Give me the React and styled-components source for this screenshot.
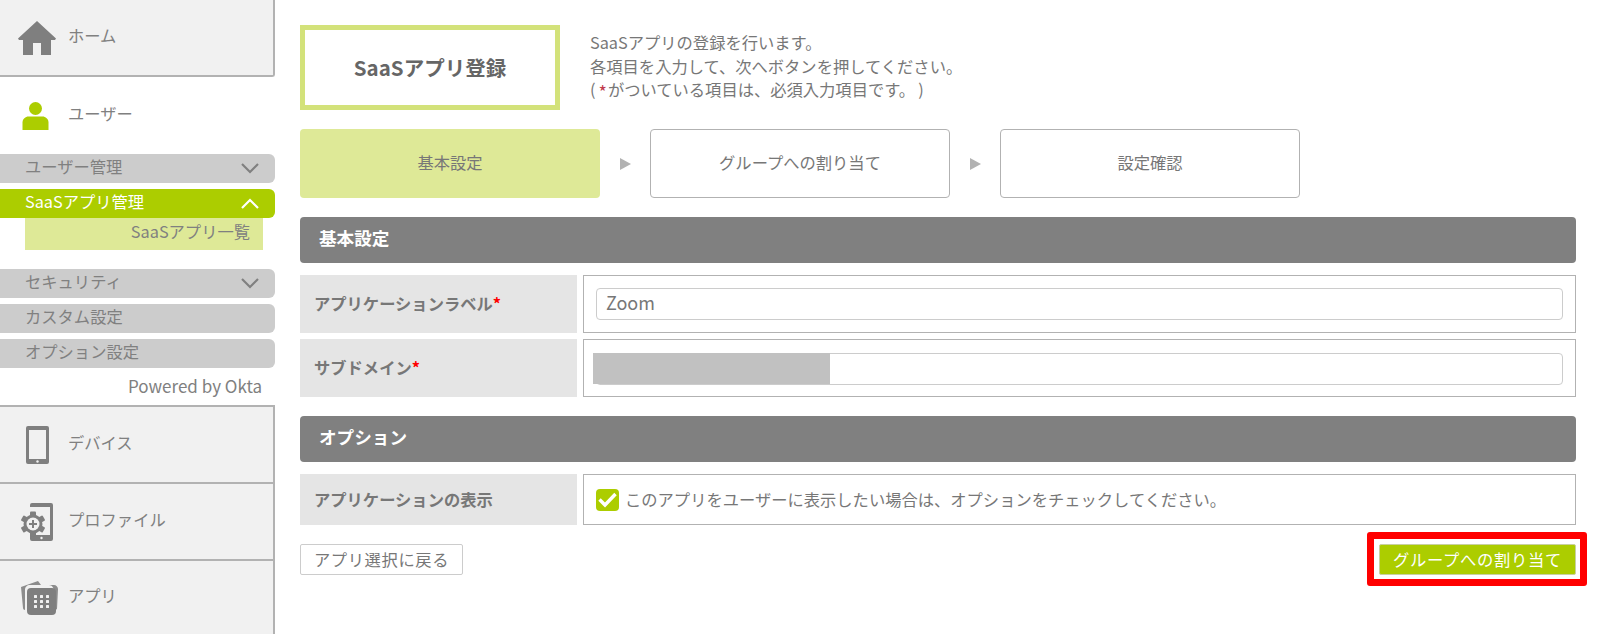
import React from "react";
import styled, { createGlobalStyle } from "styled-components";

const FONT = `"Noto Sans CJK JP", "Noto Sans", sans-serif`;
const GREEN = "#accd00";
const BORDER = "#b2b2b2";
const TEXT_SIZE = "16.3px";

const Global = createGlobalStyle`
  html, body { margin: 0; padding: 0; background: #fff; }
  body { font-family: ${FONT}; font-size: ${TEXT_SIZE}; color: #777; text-spacing-trim: space-all; }
  * { box-sizing: border-box; }
`;

const Page = styled.div`
  display: flex;
  width: 1612px;
  height: 634px;
  overflow: hidden;
`;

const Sidebar = styled.nav`
  width: 275px;
  flex: none;
  display: flex;
  flex-direction: column;
`;

const NavItem = styled.a`
  display: flex;
  align-items: center;
  height: ${(p) => p.$h}px;
  background: ${(p) => (p.$active ? "#fff" : "#f1f1f1")};
  border-right: ${(p) => (p.$active ? "0" : `2px solid ${BORDER}`)};
  border-bottom: ${(p) => (p.$active || p.$last ? "0" : `2px solid ${BORDER}`)};
  border-top: ${(p) => (p.$top ? `2px solid ${BORDER}` : "0")};
  border-bottom-right-radius: ${(p) => (p.$round ? "3px" : "0")};
  color: #808080;
  line-height: 1;
`;

const NavLabel = styled.span`
  padding-bottom: 4px;
`;

const IconSlot = styled.span`
  width: 68px;
  flex: none;
  display: flex;
  justify-content: center;
  padding-left: ${(p) => p.$pl || 0}px;
  svg { display: block; }
`;

const MenuList = styled.div`
  display: flex;
  flex-direction: column;
`;

const Pill = styled.div`
  height: 29px;
  margin-top: ${(p) => p.$mt ?? 6}px;
  padding: 0 16px 0 25px;
  display: flex;
  align-items: center;
  justify-content: space-between;
  background: ${(p) => (p.$on ? GREEN : "#ccc")};
  color: ${(p) => (p.$on ? "#fff" : "#808080")};
  border-radius: 0 6px 6px 0;
  line-height: 1;
  svg { display: block; }
`;

const PillLabel = styled.span`
  padding-bottom: 4px;
`;

const SubItem = styled.div`
  height: 32px;
  margin: 0 12px 13px 25px;
  padding: 0 13px 6px 0;
  display: flex;
  align-items: center;
  justify-content: flex-end;
  background: #dee997;
  color: #808080;
  line-height: 1;
`;

const Powered = styled.div`
  height: 37px;
  padding: 0 13px 3px 0;
  display: flex;
  align-items: center;
  justify-content: flex-end;
  color: #808080;
  font-size: 17px;
  line-height: 1;
`;

const Main = styled.main`
  width: 1276px;
  margin-left: 25px;
  padding-top: 25px;
  display: flex;
  flex-direction: column;
`;

const TitleRow = styled.header`
  display: flex;
  height: 85px;
`;

const TitleBox = styled.h1`
  width: 260px;
  height: 85px;
  margin: 0;
  padding-bottom: 2px;
  display: flex;
  align-items: center;
  justify-content: center;
  border: 5px solid #d3e27a;
  color: #666;
  font-size: 20.5px;
  font-weight: 700;
`;

const Description = styled.div`
  margin-left: 30px;
  padding-top: 6px;
  line-height: 23.5px;
  color: #777;
`;

const Asterisk = styled.span`
  padding: 0 1px 0 3px;
  color: #c0394b;
  font-size: 18px;
  line-height: 0;
  vertical-align: -3px;
`;

const Bracket = styled.span`
  padding-left: 3px;
`;

const Steps = styled.div`
  display: flex;
  align-items: center;
  margin-top: 19px;
`;

const Step = styled.div`
  width: 300px;
  height: 69px;
  padding-bottom: 4px;
  display: flex;
  align-items: center;
  justify-content: center;
  border-radius: 4px;
  border: ${(p) => (p.$on ? "0" : `1px solid ${BORDER}`)};
  background: ${(p) => (p.$on ? "#dee997" : "#fff")};
  color: #777;
`;

const StepArrow = styled.span`
  width: 50px;
  display: flex;
  justify-content: center;
  &::before {
    content: "";
    border-left: 11px solid ${BORDER};
    border-top: 6px solid transparent;
    border-bottom: 6px solid transparent;
  }
`;

const SectionBar = styled.h2`
  height: 46px;
  margin: ${(p) => p.$mt}px 0 12px;
  padding: 0 0 6px 19px;
  display: flex;
  align-items: center;
  background: #808080;
  border-radius: 4px;
  color: #fff;
  font-size: 17.6px;
  font-weight: 700;
`;

const FormRow = styled.div`
  display: flex;
  gap: 6px;
  height: ${(p) => p.$h}px;
  margin-top: ${(p) => p.$mt || 0}px;
`;

const RowLabel = styled.div`
  width: 277px;
  flex: none;
  display: flex;
  align-items: center;
  padding: 0 0 2px 14px;
  background: #e5e5e5;
  color: #777;
  font-weight: 700;
`;

const Required = styled.span`
  color: #f00;
`;

const RowValue = styled.div`
  flex: 1;
  display: flex;
  align-items: center;
  padding: 0 12px;
  border: 1px solid ${BORDER};
  color: #777;
`;

const ValueText = styled.span`
  padding-bottom: 2px;
`;

const TextInput = styled.input`
  width: 100%;
  height: 32px;
  padding: 0 9px 4px;
  border: 1px solid #ccc;
  border-radius: 4px;
  outline: none;
  background: #fff;
  color: #777;
  font-family: ${FONT};
  font-size: 18px;
`;

const MaskedField = styled.div`
  position: relative;
  width: 100%;
  height: 32px;
  margin-top: 2px;
  border: 1px solid #ccc;
  border-radius: 4px;
  background: #fff;
`;

const Mask = styled.span`
  position: absolute;
  left: -4px;
  top: -1px;
  width: 237px;
  height: 31px;
  background: #c1c1c1;
`;

const CheckBox = styled.span`
  width: 23px;
  height: 22px;
  flex: none;
  margin-right: 6px;
  display: flex;
  align-items: center;
  justify-content: center;
  background: ${GREEN};
  border-radius: 4px;
`;

const Footer = styled.div`
  position: relative;
  display: flex;
  justify-content: space-between;
  margin-top: 19px;
`;

const BackButton = styled.button`
  width: 163px;
  height: 31px;
  padding: 0 0 2px;
  background: #fff;
  border: 1px solid #ccc;
  border-radius: 2px;
  color: #777;
  font-family: ${FONT};
  font-size: ${TEXT_SIZE};
  letter-spacing: 0.6px;
`;

const NextButton = styled.button`
  width: 197px;
  height: 31px;
  padding: 0 0 2px;
  background: ${GREEN};
  border: 1px solid #c8d0a0;
  border-radius: 2px;
  color: #fff;
  font-family: ${FONT};
  font-size: ${TEXT_SIZE};
  letter-spacing: 0.7px;
`;

const Highlight = styled.span`
  position: absolute;
  right: -11px;
  top: -12px;
  width: 220px;
  height: 54px;
  border: 7px solid #f00;
  border-radius: 3px;
  pointer-events: none;
`;

const HomeIcon = () => (
  <svg width="38" height="34" viewBox="0 0 38 34">
    <path fill="#7f7f7f" d="M19 0 38 17.5l-1 1.5H33v15H23V22h-8v12H5V19H1L0 17.5z" />
  </svg>
);

const UserIcon = () => (
  <svg width="27" height="28" viewBox="0 0 26 28">
    <circle cx="13" cy="6.5" r="6.5" fill={GREEN} />
    <path fill={GREEN} d="M0 28v-7.5C0 17 3 14.500 6 14.500h14c3 0 6 2.500 6 6V28z" />
  </svg>
);

const PhoneIcon = () => (
  <svg width="23" height="38" viewBox="0 0 23 38">
    <path
      fill="#7f7f7f"
      fillRule="evenodd"
      d="M2 0h19a2 2 0 0 1 2 2v34a2 2 0 0 1-2 2H2a2 2 0 0 1-2-2V2a2 2 0 0 1 2-2zM3 4v29h17V4z"
    />
    <circle cx="11.500" cy="35.500" r="1.200" fill="#f1f1f1" />
  </svg>
);

const ProfileIcon = () => (
  <svg width="34" height="38" viewBox="0 0 34 38">
    <path
      fill="#7f7f7f"
      fillRule="evenodd"
      d="M12 0h19a2 2 0 0 1 2 2v34a2 2 0 0 1-2 2H12a2 2 0 0 1-2-2v-4h20V4H10V2a2 2 0 0 1 2-2z"
    />
    <circle cx="21.500" cy="35" r="1.200" fill="#f1f1f1" />
    <g fill="#7f7f7f">
      <circle cx="13" cy="21" r="9.500" />
      <rect x="10" y="8.500" width="6" height="25" rx="1" />
      <rect x="10" y="8.500" width="6" height="25" rx="1" transform="rotate(60 13 21)" />
      <rect x="10" y="8.500" width="6" height="25" rx="1" transform="rotate(120 13 21)" />
    </g>
    <circle cx="13" cy="21" r="6.500" fill="#f1f1f1" />
    <path stroke="#7f7f7f" strokeWidth="2" d="M9 21h8M13 17v8" />
  </svg>
);

const AppIcon = () => (
  <svg width="38" height="34" viewBox="0 0 38 34">
    <path fill="#8c8c8c" d="M1 6 18 0l3 4H10C7 4 5 6 5 9v20c-1 0-2-1-2-2zM24 4h10c2 0 4 2 4 4l-1 20-3 2V10c0-3-2-6-5-6z" />
    <rect x="8" y="7" width="29" height="27" rx="4" fill="#7f7f7f" transform="translate(-1 0)" />
    <g fill="#f1f1f1">
      {[14, 19, 24].map((y) =>
        [14, 20, 26].map((x) => <rect key={`${x}-${y}`} x={x} y={y} width="3" height="3" rx="0.5" />)
      )}
    </g>
  </svg>
);

const Chevron = ({ up, color }) => (
  <svg width="18" height="11" viewBox="0 0 18 11">
    <path
      fill="none"
      stroke={color}
      strokeWidth="2.200"
      d={up ? "M1 10 9 2l8 8" : "M1 1l8 8 8-8"}
    />
  </svg>
);

const Check = () => (
  <svg width="19" height="16" viewBox="0 0 19 16">
    <path fill="none" stroke="#fff" strokeWidth="3.400" d="M1.500 7.500 7 13 17.500 2" />
  </svg>
);

export default function App() {
  return (
    <Page>
      <Global />
      <Sidebar>
        <NavItem $h={77} $round>
          <IconSlot $pl={5}><HomeIcon /></IconSlot>
          <NavLabel>ホーム</NavLabel>
        </NavItem>
        <NavItem $h={77} $active>
          <IconSlot $pl={3}><UserIcon /></IconSlot>
          <NavLabel>ユーザー</NavLabel>
        </NavItem>
        <MenuList>
          <Pill $mt={0}>
            <PillLabel>ユーザー管理</PillLabel>
            <Chevron color="#808080" />
          </Pill>
          <Pill $on>
            <PillLabel>SaaSアプリ管理</PillLabel>
            <Chevron up color="#fff" />
          </Pill>
          <SubItem>SaaSアプリ一覧</SubItem>
          <Pill $mt={6}>
            <PillLabel>セキュリティ</PillLabel>
            <Chevron color="#808080" />
          </Pill>
          <Pill><PillLabel>カスタム設定</PillLabel></Pill>
          <Pill><PillLabel>オプション設定</PillLabel></Pill>
        </MenuList>
        <Powered>Powered by Okta</Powered>
        <NavItem $h={79} $top>
          <IconSlot $pl={6}><PhoneIcon /></IconSlot>
          <NavLabel>デバイス</NavLabel>
        </NavItem>
        <NavItem $h={77}>
          <IconSlot $pl={5}><ProfileIcon /></IconSlot>
          <NavLabel>プロファイル</NavLabel>
        </NavItem>
        <NavItem $h={73} $last>
          <IconSlot $pl={10}><AppIcon /></IconSlot>
          <NavLabel>アプリ</NavLabel>
        </NavItem>
      </Sidebar>
      <Main>
        <TitleRow>
          <TitleBox>SaaSアプリ登録</TitleBox>
          <Description>
            SaaSアプリの登録を行います。
            <br />
            各項目を入力して、次へボタンを押してください。
            <br />
            (<Asterisk>*</Asterisk>がついている項目は、必須入力項目です。<Bracket>)</Bracket>
          </Description>
        </TitleRow>
        <Steps>
          <Step $on>基本設定</Step>
          <StepArrow />
          <Step>グループへの割り当て</Step>
          <StepArrow />
          <Step>設定確認</Step>
        </Steps>
        <SectionBar $mt={19}>基本設定</SectionBar>
        <FormRow $h={58}>
          <RowLabel>
            アプリケーションラベル<Required>*</Required>
          </RowLabel>
          <RowValue>
            <TextInput defaultValue="Zoom" />
          </RowValue>
        </FormRow>
        <FormRow $h={58} $mt={6}>
          <RowLabel>
            サブドメイン<Required>*</Required>
          </RowLabel>
          <RowValue>
            <MaskedField>
              <Mask />
            </MaskedField>
          </RowValue>
        </FormRow>
        <SectionBar $mt={19}>オプション</SectionBar>
        <FormRow $h={51}>
          <RowLabel>アプリケーションの表示</RowLabel>
          <RowValue>
            <CheckBox><Check /></CheckBox>
            <ValueText>このアプリをユーザーに表示したい場合は、オプションをチェックしてください。</ValueText>
          </RowValue>
        </FormRow>
        <Footer>
          <BackButton>アプリ選択に戻る</BackButton>
          <NextButton>グループへの割り当て</NextButton>
          <Highlight />
        </Footer>
      </Main>
    </Page>
  );
}
